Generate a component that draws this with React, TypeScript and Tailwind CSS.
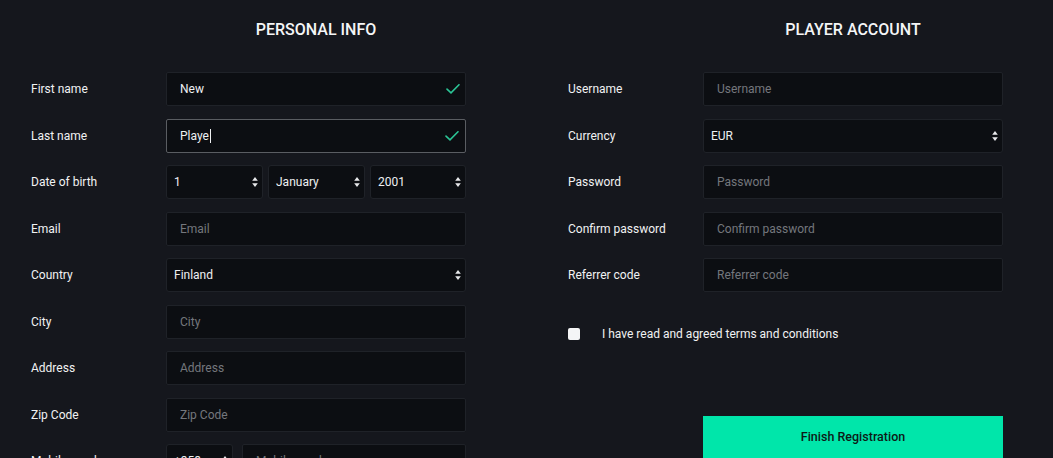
import type { ReactNode } from 'react';

const FIELD =
  'h-[34px] w-full rounded-[2px] border border-[#1f2228] bg-[#0c0e12] px-[13px] text-[12px] text-[#eef0f2] placeholder:text-[#74777d] outline-none';

const SortArrows = () => (
  <svg
    width="6"
    height="11"
    viewBox="0 0 6 11"
    className="pointer-events-none absolute right-[5px] top-1/2 -translate-y-1/2"
  >
    <path d="M3 0.5 L5.8 4.3 L0.2 4.3 Z" fill="#e8e9eb" />
    <path d="M3 10.5 L5.8 6.7 L0.2 6.7 Z" fill="#e8e9eb" />
  </svg>
);

const Check = () => (
  <svg
    width="14"
    height="11"
    viewBox="0 0 14 11"
    className="pointer-events-none absolute right-[6px] top-1/2 -translate-y-1/2"
  >
    <path
      d="M1 5.6 L5 9.4 L13 1.2"
      fill="none"
      stroke="#2bc495"
      strokeWidth="1.6"
      strokeLinecap="round"
    />
  </svg>
);

interface RowProps {
  label: string;
  children: ReactNode;
}

const Row = ({ label, children }: RowProps) => (
  <div className="flex items-center">
    <label className="w-[135px] shrink-0 text-[12px] text-[#f1f2f3]">
      {label}
    </label>
    <div className="w-[300px]">{children}</div>
  </div>
);

interface SelectProps {
  value: string;
  className?: string;
}

const Select = ({ value, className = '' }: SelectProps) => (
  <div className={`relative ${className}`}>
    <select
      defaultValue={value}
      className="h-[34px] w-full appearance-none rounded-[3px] border border-[#1f2228] bg-[#0c0e12] pl-[7px] text-[12px] text-[#eef0f2] outline-none"
    >
      <option>{value}</option>
    </select>
    <SortArrows />
  </div>
);

const TextField = ({ placeholder }: { placeholder: string }) => (
  <input type="text" placeholder={placeholder} className={FIELD} />
);

export default function App() {
  return (
    <div
      className="h-[458px] w-[1053px] overflow-hidden bg-[#15171d]"
      style={{ fontFamily: 'Roboto, "Liberation Sans", sans-serif' }}
    >
      <div className="flex gap-[101px] pl-[31px] pt-[20px]">
        {/* personal info */}
        <section className="w-[435px]">
          <h2 className="ml-[135px] w-[300px] text-center text-[16px] font-medium leading-[20px] text-[#f4f5f6]">
            PERSONAL INFO
          </h2>
          <div className="mt-[32px] flex flex-col gap-[12.5px]">
            <Row label="First name">
              <div className="relative">
                <input type="text" defaultValue="New" className={FIELD} />
                <Check />
              </div>
            </Row>
            <Row label="Last name">
              <div className="relative flex h-[34px] items-center rounded-[2px] border border-[#5a5d62] bg-[#0c0e12] px-[13px] text-[12px] text-[#eef0f2]">
                Playe
                <span className="ml-[1px] h-[14px] w-[1px] bg-[#eef0f2]" />
                <Check />
              </div>
            </Row>
            <Row label="Date of birth">
              <div className="flex gap-[5px]">
                <Select value="1" className="w-[97px]" />
                <Select value="January" className="w-[97px]" />
                <Select value="2001" className="w-[96px]" />
              </div>
            </Row>
            <Row label="Email">
              <TextField placeholder="Email" />
            </Row>
            <Row label="Country">
              <Select value="Finland" />
            </Row>
            <Row label="City">
              <TextField placeholder="City" />
            </Row>
            <Row label="Address">
              <TextField placeholder="Address" />
            </Row>
            <Row label="Zip Code">
              <TextField placeholder="Zip Code" />
            </Row>
            <Row label="Mobile number">
              <div className="flex gap-[9px]">
                <Select value="+358" className="w-[67px] shrink-0" />
                <input
                  type="text"
                  placeholder="Mobile number"
                  className={FIELD}
                />
              </div>
            </Row>
          </div>
        </section>

        {/* player account */}
        <section className="w-[436px] pl-[1px]">
          <h2 className="ml-[135px] w-[300px] text-center text-[16px] font-medium leading-[20px] text-[#f4f5f6]">
            PLAYER ACCOUNT
          </h2>
          <div className="mt-[32px] flex flex-col gap-[12.5px]">
            <Row label="Username">
              <TextField placeholder="Username" />
            </Row>
            <Row label="Currency">
              <Select value="EUR" />
            </Row>
            <Row label="Password">
              <input type="password" placeholder="Password" className={FIELD} />
            </Row>
            <Row label="Confirm password">
              <input
                type="password"
                placeholder="Confirm password"
                className={FIELD}
              />
            </Row>
            <Row label="Referrer code">
              <TextField placeholder="Referrer code" />
            </Row>
          </div>

          <label className="mt-[33px] flex items-center text-[12px] text-[#f1f2f3]">
            <span className="h-[12px] w-[12px] rounded-[2px] bg-[#f4f5f6]" />
            <span className="ml-[22px]">
              I have read and agreed terms and conditions
            </span>
          </label>

          <button className="ml-[135px] mt-[73px] h-[42px] w-[300px] bg-[#00e6aa] text-[12.5px] font-medium text-[#0d1a16]">
            Finish Registration
          </button>
        </section>
      </div>
    </div>
  );
}
